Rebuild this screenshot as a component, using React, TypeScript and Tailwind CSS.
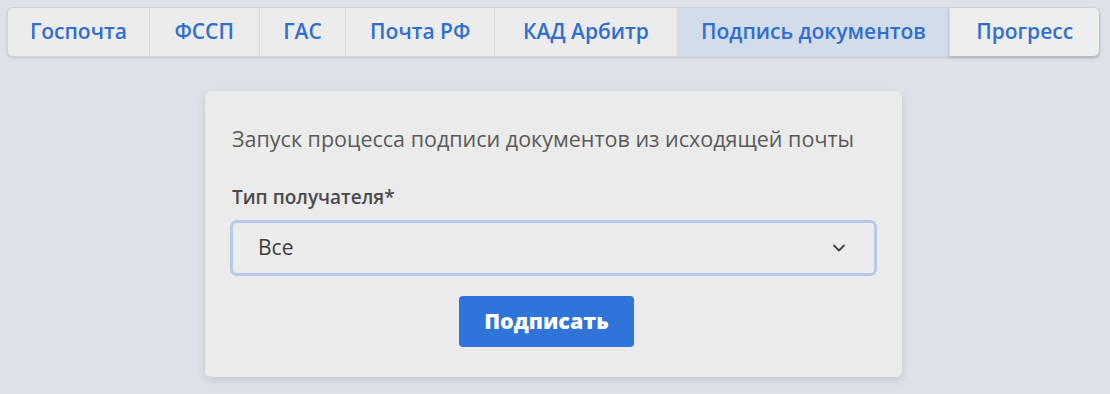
import { ChevronDown } from "lucide-react";

const tabs = [
  { label: "Госпочта", w: "w-[141px]" },
  { label: "ФССП", w: "w-[110px]" },
  { label: "ГАС", w: "w-[87px]" },
  { label: "Почта РФ", w: "w-[149px]" },
  { label: "КАД Арбитр", w: "w-[183px]" },
  { label: "Подпись документов", w: "w-[273px]" },
  { label: "Прогресс", w: "w-[150px]" },
];

const App = () => {
  return (
    <div
      className="w-full h-[394px] bg-[#dde1e8] pl-[7px] pr-[10px] pt-[7px]"
      style={{ fontFamily: '"Open Sans", "Noto Sans", sans-serif' }}
    >
      {/* Tabs */}
      <div className="flex h-[50px] rounded-md border border-[#cfd2d6] bg-[#ececec] shadow-[0_1px_2px_rgba(0,0,0,0.12)]">
        {tabs.map((tab, i) => {
          const active = tab.label === "Подпись документов";
          const last = i === tabs.length - 1;
          return (
            <div
              key={tab.label}
              className={
                tab.w +
                " flex items-center justify-center text-[21px] font-semibold text-[#2f6fcf] " +
                (i > 0 ? "border-l border-[#d6d8db] " : "rounded-l-md ") +
                (active ? "bg-[#d2dcea] " : "") +
                (last ? "rounded-r-md shadow-[0_2px_4px_rgba(0,0,0,0.15)] bg-[#eeeeee]" : "")
              }
            >
              {tab.label}
            </div>
          );
        })}
      </div>

      {/* Card */}
      <div className="flex justify-center mt-[34px]">
        <div className="w-[697px] bg-[#ebebeb] rounded-md shadow-[0_3px_8px_rgba(0,0,0,0.12)] px-[27px] pt-[33px] pb-[30px]">
          <p className="text-[21.5px] text-[#5a5a5a] leading-[30px]">
            Запуск процесса подписи документов из исходящей почты
          </p>

          <label className="block mt-[30px] text-[19px] font-semibold text-[#4a4a4a] leading-[26px]">
            Тип получателя*
          </label>

          {/* Select */}
          <div className="mt-[10px] -mx-[2px] h-[56px] rounded-[7px] border-[3px] border-[#b3c9e8] bg-[#ececec] flex items-center justify-between pl-[25px] pr-[25px]">
            <span className="text-[21px] text-[#3c3c3c]">Все</span>
            <ChevronDown size={20} strokeWidth={2.2} className="text-[#444]" />
          </div>

          {/* Button */}
          <div className="flex justify-center mt-[20px] pr-[14px]">
            <button className="w-[175px] h-[51px] rounded-[4px] bg-[#2f74d8] text-white text-[21.5px] font-extrabold">
              Подписать
            </button>
          </div>
        </div>
      </div>
    </div>
  );
};

export default App;
